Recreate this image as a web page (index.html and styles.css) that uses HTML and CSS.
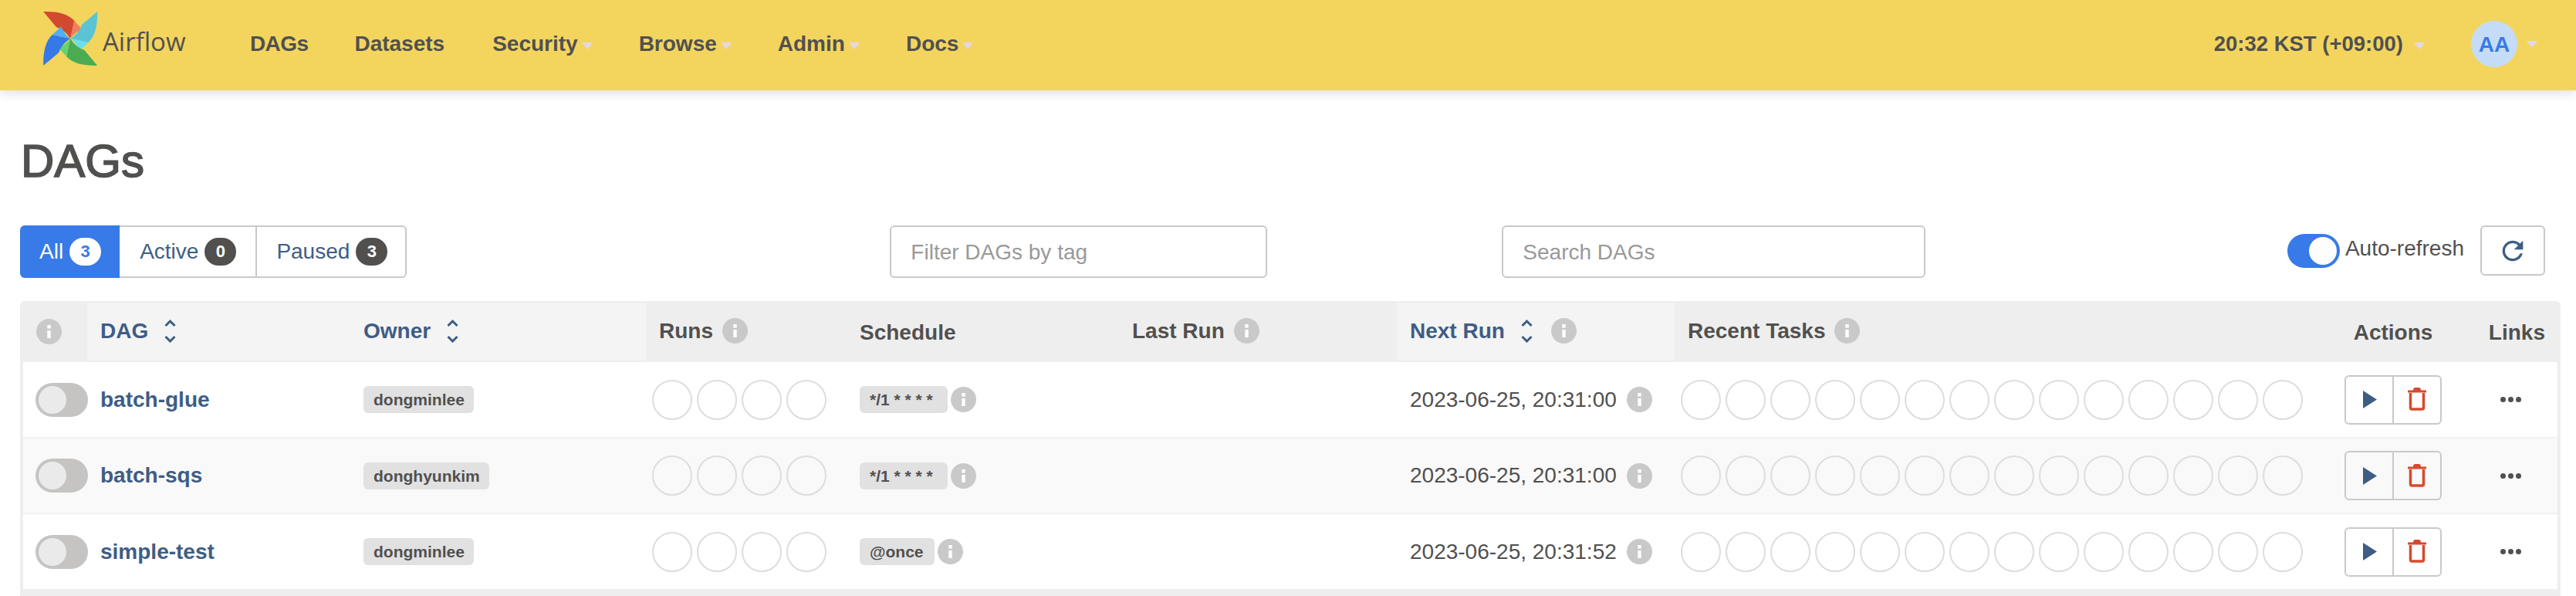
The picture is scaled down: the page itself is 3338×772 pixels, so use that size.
FILE: index.html
```html
<!DOCTYPE html>
<html lang="en">
<head>
    <meta charset="UTF-8">
    <title>DAGs - Airflow</title>
    <link rel="stylesheet" href="styles.css">
</head>
<body>
    <!-- shared icons -->
    <svg class="icon-defs" aria-hidden="true">
        <symbol id="info" viewBox="0 0 33 33">
            <circle cx="16.5" cy="16.5" r="16.5" fill="#c9c9c9"/>
            <rect x="14.3" y="8" width="4.4" height="4.6" fill="#fff"/>
            <rect x="14.3" y="15" width="4.4" height="10" fill="#fff"/>
        </symbol>
        <symbol id="sort" viewBox="0 0 15 30">
            <path d="M1.5 8 7.5 2l6 6M1.5 22l6 6 6-6" fill="none" stroke="#3e5d84" stroke-width="3"/>
        </symbol>
        <symbol id="play" viewBox="0 0 18 23">
            <path d="M0 0 18 11.5 0 23z" fill="#3e5d84"/>
        </symbol>
        <symbol id="trash" viewBox="0 0 24 31">
            <path d="M0 4.5h24v3H0zM7 4.5C7 2 8 1 10 1h4c2 0 3 1 3 3.500z" fill="#d64a2f"/>
            <path d="M3.500 8v19c0 1.300.7 2 2 2h13c1.300 0 2-.7 2-2V8" fill="none" stroke="#d64a2f" stroke-width="3.500"/>
        </symbol>
    </svg>

    <nav class="navbar">
        <a class="brand" href="#">
            <svg class="brand-logo" viewBox="80 40 212 216">
                <path fill="#d2492f" d="M185 148C170 125 155 112 130 103L80 43C130 42 175 50 200 78C196 100 190 125 185 148z"/>
                <path fill="#f08060" d="M185 148C190 125 196 100 200 78L232 113C210 120 195 135 185 148z"/>
                <g transform="rotate(90 185 148)">
                    <path fill="#5ac4d6" d="M185 148C170 125 155 112 130 103L80 43C130 42 175 50 200 78C196 100 190 125 185 148z"/>
                    <path fill="#66e0f0" d="M185 148C190 125 196 100 200 78L232 113C210 120 195 135 185 148z"/>
                </g>
                <g transform="rotate(180 185 148)">
                    <path fill="#4bab53" d="M185 148C170 125 155 112 130 103L80 43C130 42 175 50 200 78C196 100 190 125 185 148z"/>
                    <path fill="#63d56c" d="M185 148C190 125 196 100 200 78L232 113C210 120 195 135 185 148z"/>
                </g>
                <g transform="rotate(270 185 148)">
                    <path fill="#3579e6" d="M185 148C170 125 155 112 130 103L80 43C130 42 175 50 200 78C196 100 190 125 185 148z"/>
                    <path fill="#4fb0f5" d="M185 148C190 125 196 100 200 78L232 113C210 120 195 135 185 148z"/>
                </g>
            </svg>
            <span class="brand-name">Airflow</span>
        </a>
        <ul class="nav-menu">
            <li>DAGs</li>
            <li>Datasets</li>
            <li>Security<span class="caret"></span></li>
            <li>Browse<span class="caret"></span></li>
            <li>Admin<span class="caret"></span></li>
            <li>Docs<span class="caret"></span></li>
        </ul>
        <div class="nav-right">
            <span class="nav-time">20:32 KST (+09:00)<span class="caret caret-time"></span></span>
            <span class="avatar">AA</span><span class="caret caret-user"></span>
        </div>
    </nav>

    <main class="container">
        <h1>DAGs</h1>

        <div class="toolbar">
            <div class="status-filter">
                <a class="status-btn active" href="#">All <span class="count">3</span></a>
                <a class="status-btn" href="#">Active <span class="count">0</span></a>
                <a class="status-btn" href="#">Paused <span class="count">3</span></a>
            </div>
            <input class="text-input tag-input" type="text" placeholder="Filter DAGs by tag">
            <input class="text-input search-input" type="text" placeholder="Search DAGs">
            <div class="auto-refresh">
                <span class="switch on"></span>
                <span class="auto-label">Auto-refresh</span>
            </div>
            <button class="refresh-btn">
                <svg viewBox="0 0 24 24" width="40" height="40"><path fill="#3e5d84" d="M17.65 6.35C16.2 4.9 14.21 4 12 4c-4.420 0-7.990 3.580-7.990 8s3.570 8 7.990 8c3.730 0 6.840-2.550 7.730-6h-2.080c-.82 2.330-3.040 4-5.650 4-3.310 0-6-2.690-6-6s2.690-6 6-6c1.660 0 3.140.69 4.220 1.780L13 11h7V4l-2.350 2.350z"/></svg>
            </button>
        </div>

        <div class="table-wrap">
            <table class="dag-table">
                <colgroup>
                    <col class="col-pause"><col class="col-dag"><col class="col-owner"><col class="col-runs"><col class="col-schedule">
                    <col class="col-last"><col class="col-next"><col class="col-tasks"><col class="col-actions"><col class="col-links">
                </colgroup>
                <thead>
                    <tr>
                        <th class="th-pause"><svg class="info"><use href="#info"/></svg></th>
                        <th class="sorted"><span class="th-inner link">DAG<svg class="sort"><use href="#sort"/></svg></span></th>
                        <th class="sorted"><span class="th-inner link">Owner<svg class="sort"><use href="#sort"/></svg></span></th>
                        <th><span class="th-inner">Runs<svg class="info"><use href="#info"/></svg></span></th>
                        <th class="th-plain">Schedule</th>
                        <th><span class="th-inner">Last Run<svg class="info"><use href="#info"/></svg></span></th>
                        <th class="sorted"><span class="th-inner link">Next Run<svg class="sort"><use href="#sort"/></svg><svg class="info info-next"><use href="#info"/></svg></span></th>
                        <th><span class="th-inner">Recent Tasks<svg class="info"><use href="#info"/></svg></span></th>
                        <th class="th-plain th-actions">Actions</th>
                        <th class="th-plain th-links">Links</th>
                    </tr>
                </thead>
                <tbody>
                    <tr>
                        <td class="td-pause"><span class="switch"></span></td>
                        <td><a class="dag-name" href="#">batch-glue</a></td>
                        <td><span class="tag">dongminlee</span></td>
                        <td class="td-circles"><div class="circles"><i></i><i></i><i></i><i></i></div></td>
                        <td><div class="cell-flex"><span class="tag tag-schedule">*/1 * * * *</span><svg class="info"><use href="#info"/></svg></div></td>
                        <td></td>
                        <td><div class="cell-flex next-run">2023-06-25, 20:31:00<svg class="info"><use href="#info"/></svg></div></td>
                        <td class="td-circles"><div class="circles"><i></i><i></i><i></i><i></i><i></i><i></i><i></i><i></i><i></i><i></i><i></i><i></i><i></i><i></i></div></td>
                        <td class="td-actions"><div class="action-group"><button><svg class="play"><use href="#play"/></svg></button><button><svg class="trash"><use href="#trash"/></svg></button></div></td>
                        <td class="td-links"><div class="dots"><i></i><i></i><i></i></div></td>
                    </tr>
                    <tr>
                        <td class="td-pause"><span class="switch"></span></td>
                        <td><a class="dag-name" href="#">batch-sqs</a></td>
                        <td><span class="tag">donghyunkim</span></td>
                        <td class="td-circles"><div class="circles"><i></i><i></i><i></i><i></i></div></td>
                        <td><div class="cell-flex"><span class="tag tag-schedule">*/1 * * * *</span><svg class="info"><use href="#info"/></svg></div></td>
                        <td></td>
                        <td><div class="cell-flex next-run">2023-06-25, 20:31:00<svg class="info"><use href="#info"/></svg></div></td>
                        <td class="td-circles"><div class="circles"><i></i><i></i><i></i><i></i><i></i><i></i><i></i><i></i><i></i><i></i><i></i><i></i><i></i><i></i></div></td>
                        <td class="td-actions"><div class="action-group"><button><svg class="play"><use href="#play"/></svg></button><button><svg class="trash"><use href="#trash"/></svg></button></div></td>
                        <td class="td-links"><div class="dots"><i></i><i></i><i></i></div></td>
                    </tr>
                    <tr>
                        <td class="td-pause"><span class="switch"></span></td>
                        <td><a class="dag-name" href="#">simple-test</a></td>
                        <td><span class="tag">dongminlee</span></td>
                        <td class="td-circles"><div class="circles"><i></i><i></i><i></i><i></i></div></td>
                        <td><div class="cell-flex"><span class="tag tag-once">@once</span><svg class="info"><use href="#info"/></svg></div></td>
                        <td></td>
                        <td><div class="cell-flex next-run">2023-06-25, 20:31:52<svg class="info"><use href="#info"/></svg></div></td>
                        <td class="td-circles"><div class="circles"><i></i><i></i><i></i><i></i><i></i><i></i><i></i><i></i><i></i><i></i><i></i><i></i><i></i><i></i></div></td>
                        <td class="td-actions"><div class="action-group"><button><svg class="play"><use href="#play"/></svg></button><button><svg class="trash"><use href="#trash"/></svg></button></div></td>
                        <td class="td-links"><div class="dots"><i></i><i></i><i></i></div></td>
                    </tr>
                </tbody>
            </table>
        </div>
    </main>
</body>
</html>
```
FILE: styles.css
```css
:root {
    --text: #51504f;
    --link: #3e5d84;
    --blue: #377ae8;
    --line: #c9c9c9;
    --band: #eeeeee;
}

html, body {
    height: 772px;
    overflow: hidden;
}

body {
    margin: 0;
    background: #fff;
    color: var(--text);
    font-family: "Liberation Sans", Arial, sans-serif;
    font-size: 28px;
}

a {
    color: inherit;
    text-decoration: none;
}

.icon-defs {
    display: none;
}

/* navbar */
.navbar {
    display: flex;
    align-items: flex-start;
    height: 117px;
    background: #f3d55e;
    box-shadow: 0 3px 14px rgba(0,0,0,0.14);
    position: relative;
}

.brand {
    display: flex;
    margin: 14px 0 0 56px;
    width: 268px;
}

.brand-logo {
    width: 71px;
    height: 72px;
    flex-shrink: 0;
}

.brand-name {
    font-family: "Open Sans", sans-serif;
    font-size: 33px;
    line-height: 46px;
    margin: 17px 0 0 6px;
}

.nav-menu {
    display: flex;
    gap: 60px;
    list-style: none;
    margin: 0;
    padding: 41px 0 0;
    font-weight: bold;
    line-height: 32px;
}

.nav-menu li:first-child {
    letter-spacing: -0.6px;
}

.nav-menu li:nth-child(2) {
    margin-right: 2px;
}

.caret {
    display: inline-block;
    width: 0;
    height: 0;
    margin-left: 5px;
    vertical-align: 2px;
    border-left: 7.5px solid transparent;
    border-right: 7.5px solid transparent;
    border-top: 9px solid #e3d7e2;
}

.nav-right {
    display: flex;
    align-items: center;
    margin-left: auto;
    padding: 27px 50px 0 0;
    font-weight: bold;
}

.nav-time {
    font-size: 27.5px;
}

.caret-time {
    margin-left: 14px;
}

.avatar {
    width: 60px;
    height: 60px;
    margin-left: 60px;
    border-radius: 50%;
    background: #c5dcf8;
    color: var(--blue);
    text-align: center;
    line-height: 62px;
}

.caret-user {
    margin-left: 12px;
}

/* page */
.container {
    padding: 0 20px 0 26px;
}

h1 {
    margin: 59px 0 0;
    font-size: 60px;
    font-weight: normal;
    line-height: 66px;
    -webkit-text-stroke: 1.6px var(--text);
    padding-left: 1px;
}

.toolbar {
    display: flex;
    align-items: flex-start;
    margin-top: 50px;
    padding-right: 20px;
}

.status-filter {
    display: flex;
}

.status-btn {
    display: flex;
    align-items: center;
    gap: 8px;
    height: 68px;
    box-sizing: border-box;
    padding: 0 25px 0 26px;
    border: 2px solid var(--line);
    border-left-width: 0;
    color: var(--link);
}

.status-btn:last-child {
    padding: 0 23px 0 25px;
    border-radius: 0 6px 6px 0;
}

.status-btn.active {
    background: var(--blue);
    border: none;
    border-radius: 6px 0 0 6px;
    color: #fff;
    padding: 0 24px 0 25px;
}

.count {
    min-width: 41px;
    height: 36px;
    box-sizing: border-box;
    padding: 0 10px;
    border-radius: 18px;
    background: var(--text);
    color: #fff;
    font-size: 22px;
    font-weight: bold;
    line-height: 36px;
    text-align: center;
}

.active .count {
    background: #fff;
    color: var(--blue);
}

.text-input {
    height: 68px;
    box-sizing: border-box;
    padding: 2px 25px 0;
    border: 2px solid var(--line);
    border-radius: 6px;
    font-family: inherit;
    font-size: 28px;
    color: var(--text);
}

.text-input::placeholder {
    color: #999;
}

.tag-input {
    width: 489px;
    margin-left: 626px;
}

.search-input {
    width: 549px;
    margin-left: 304px;
}

.auto-refresh {
    display: flex;
    align-items: center;
    gap: 7px;
    margin-left: auto;
    margin-top: 11px;
}

.auto-label {
    line-height: 32px;
    margin-top: -6px;
}

.switch {
    display: block;
    width: 68px;
    height: 44px;
    box-sizing: border-box;
    border-radius: 22px;
    background: #c5c4c2;
    position: relative;
}

.switch::after {
    content: "";
    position: absolute;
    top: 4px;
    left: 4px;
    width: 36px;
    height: 36px;
    border-radius: 50%;
    background: #eaeaea;
}

.switch.on {
    background: var(--blue);
}

.switch.on::after {
    left: 28px;
    background: #fdfdfb;
}

.refresh-btn {
    display: flex;
    align-items: center;
    justify-content: center;
    width: 84px;
    height: 65px;
    margin-left: 21px;
    padding: 0;
    border: 2px solid var(--line);
    border-radius: 6px;
    background: #fff;
}

/* table */
.table-wrap {
    margin-top: 30px;
    padding: 2px 4px 30px;
    background: var(--band);
    border-radius: 6px 6px 0 0;
}

.dag-table {
    width: 3284px;
    table-layout: fixed;
    border-collapse: separate;
    border-spacing: 0;
}

.col-pause { width: 83px; }
.col-dag { width: 341px; }
.col-owner { width: 383px; }
.col-runs { width: 260px; }
.col-schedule { width: 353px; }
.col-last { width: 360px; }
.col-next { width: 360px; }
.col-tasks { width: 851px; }
.col-actions { width: 160px; }
.col-links { width: 133px; }

.dag-table th {
    height: 77px;
    box-sizing: border-box;
    padding: 0 17px;
    border-bottom: 2px solid var(--band);
    background: var(--band);
    text-align: left;
    vertical-align: middle;
    line-height: 32px;
}

.dag-table th.sorted {
    background: #f4f4f4;
}

.dag-table th.th-plain {
    padding-top: 3px;
}

.th-inner {
    display: flex;
    align-items: center;
    gap: 12px;
    margin-bottom: 2px;
    height: 34px;
}

.th-inner.link {
    color: var(--link);
    gap: 21px;
}

.dag-table .th-pause {
    padding: 0 0 0 17px;
}

.dag-table .th-actions {
    text-align: center;
}

.dag-table .th-links {
    text-align: right;
    padding-right: 16px;
}

.info {
    display: block;
    width: 33px;
    height: 33px;
    flex-shrink: 0;
}

.sort {
    width: 15px;
    height: 30px;
    flex-shrink: 0;
}

.info-next {
    margin-left: 3px;
}

.dag-table td {
    height: 98px;
    box-sizing: border-box;
    padding: 0 17px;
    border-bottom: 2px solid #f1f1f1;
    background: #fff;
    vertical-align: middle;
}

.dag-table tbody tr:first-child td {
    height: 99px;
}

.dag-table tbody tr:nth-child(even) td {
    background: #f9f9f9;
}

.dag-table tbody tr:last-child td {
    height: 97px;
    border-bottom: none;
}

.dag-table .td-pause {
    padding: 0 0 0 16px;
}

.dag-name {
    color: var(--link);
    font-weight: bold;
}

.tag {
    display: inline-block;
    height: 35px;
    padding: 0 12px 0 13px;
    border-radius: 6px;
    background: #e1e1e1;
    font-size: 21px;
    font-weight: bold;
    line-height: 36px;
    vertical-align: middle;
}

.tag-schedule {
    padding-right: 19px;
}

.tag-once {
    padding-right: 14px;
}

.cell-flex {
    display: flex;
    align-items: center;
    gap: 4px;
}

.next-run {
    gap: 13px;
}

.dag-table .td-circles {
    padding: 0 0 0 8px;
}

.circles {
    display: flex;
    gap: 6px;
}

.circles i {
    display: block;
    width: 52px;
    height: 52px;
    box-sizing: border-box;
    border: 2px solid #dddddd;
    border-radius: 50%;
}

.dag-table .td-actions {
    padding: 0 0 0 17px;
}

.action-group {
    display: flex;
    width: 126px;
    height: 64px;
    box-sizing: border-box;
    border: 2px solid var(--line);
    border-radius: 6px;
}

.action-group button {
    flex: 1;
    display: flex;
    align-items: center;
    justify-content: center;
    padding: 0;
    border: none;
    background: none;
}

.action-group button + button {
    border-left: 2px solid var(--line);
}

.play {
    width: 18px;
    height: 23px;
    margin-left: 2px;
}

.trash {
    width: 24px;
    height: 31px;
    margin-bottom: 2px;
}

.dots {
    display: flex;
    gap: 3px;
    margin-left: 59px;
}

.dots i {
    width: 7px;
    height: 7px;
    border-radius: 50%;
    background: var(--text);
}

.dag-table .td-links {
    padding: 0;
}
```
